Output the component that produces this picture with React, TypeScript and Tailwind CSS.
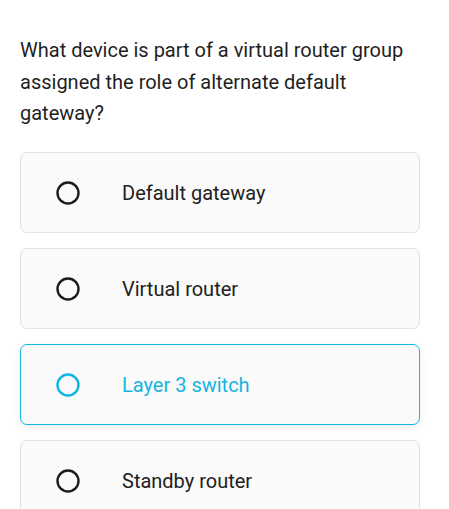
const options = [
  { label: "Default gateway", active: false },
  { label: "Virtual router", active: false },
  { label: "Layer 3 switch", active: true },
  { label: "Standby router", active: false },
]

function Radio({ active }: { active: boolean }) {
  return (
    <svg width="26" height="26" viewBox="0 0 26 26" className="shrink-0">
      <circle cx="13" cy="13" r="10.5" fill="none" stroke={active ? "#0fb6e2" : "#1c1c1c"} strokeWidth="2.4" />
    </svg>
  )
}

export default function App() {
  return (
    <div className="w-[449px] h-[509px] overflow-hidden bg-white font-['Roboto',sans-serif]">
      <div className="px-5 pt-[35px]">
        <p className="text-[20px] leading-[31.5px] text-[#1f1f1f] pr-4">
          What device is part of a virtual router group assigned the role of alternate default gateway?
        </p>
        <div className="mt-[22px] flex flex-col gap-[15px] w-[400px]">
          {options.map((o) => (
            <div
              key={o.label}
              className={
                o.active
                  ? "h-[81px] shrink-0 rounded-[7px] border border-[#13b8e3] bg-[#fafafa] shadow-[0_2px_8px_rgba(0,0,0,0.08)] flex items-center pl-[34px] pt-[2px]"
                  : "h-[81px] shrink-0 rounded-[7px] border border-[#e0e3e8] bg-[#fafafa] flex items-center pl-[34px] pt-[2px]"
              }
            >
              <Radio active={o.active} />
              <span
                className={
                  o.active
                    ? "ml-[41px] text-[20px] text-[#14b5e0]"
                    : "ml-[41px] text-[20px] text-[#212121]"
                }
              >
                {o.label}
              </span>
            </div>
          ))}
        </div>
      </div>
    </div>
  )
}
